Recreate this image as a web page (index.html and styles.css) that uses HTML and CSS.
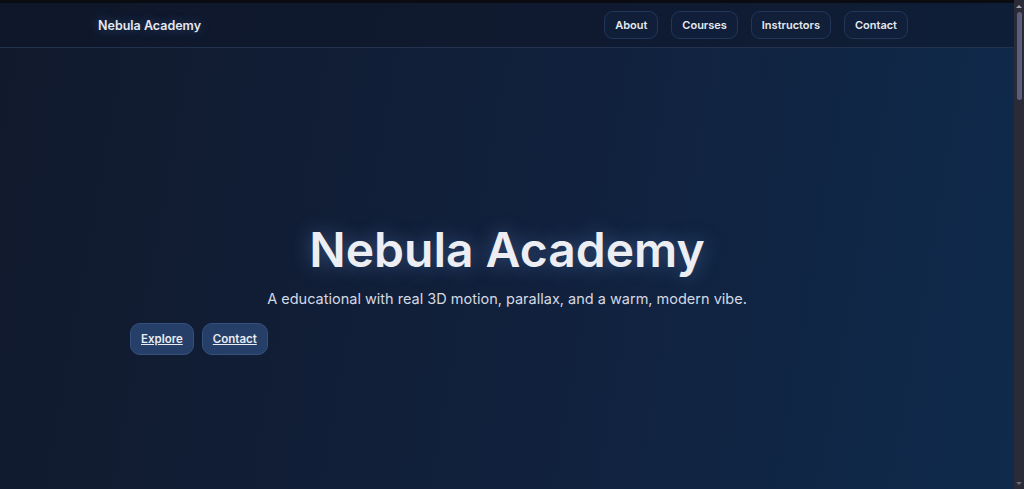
FILE: index.html
```html
<!DOCTYPE html>
<html lang="en">
<head>
    <meta charset="UTF-8">
    <meta name="viewport" content="width=device-width, initial-scale=1.0">
    <title>Nebula Academy</title>
    <link rel="stylesheet" href="styles.css">
</head>
<body>
    <div class="page">
        <header class="topbar">
            <div class="topbar-inner">
                <a class="brand" href="#">Nebula Academy</a>
                <nav class="nav">
                    <a class="nav-link" href="#about">About</a>
                    <a class="nav-link" href="#courses">Courses</a>
                    <a class="nav-link" href="#instructors">Instructors</a>
                    <a class="nav-link" href="#contact">Contact</a>
                </nav>
            </div>
        </header>

        <main>
            <section class="hero">
                <div class="hero-inner">
                    <h1 class="hero-title">Nebula Academy</h1>
                    <p class="hero-text">A educational with real 3D motion, parallax, and a warm, modern vibe.</p>
                    <div class="hero-actions">
                        <a class="btn" href="#courses">Explore</a>
                        <a class="btn" href="#contact">Contact</a>
                    </div>
                </div>
            </section>

            <section class="more" id="about"></section>
        </main>
    </div>

    <!-- slim scroll rail -->
    <div class="rail">
        <span class="rail-arrow up"></span>
        <span class="rail-thumb"></span>
        <span class="rail-arrow down"></span>
    </div>
</body>
</html>
```

FILE: styles.css
```css
* {
    box-sizing: border-box;
}
html, body {
    height: 100%;
    overflow: hidden;
}
body {
    margin: 0;
    display: flex;
    font-family: "Inter", "Open Sans", sans-serif;
    color: #e8ebf2;
    background: #0e1526;
}

.page {
    flex: 1;
    height: 100vh;
    overflow: hidden;
    background: linear-gradient(100deg, #111a2d 0%, #11203b 50%, #0f2a4c 100%);
}

.rail {
    width: 10px;
    height: 100vh;
    display: flex;
    flex-direction: column;
    align-items: center;
    padding: 5px 0 4px;
    background: #2a2b36;
}
.rail-arrow {
    width: 0;
    height: 0;
    border-left: 3px solid transparent;
    border-right: 3px solid transparent;
}
.rail-arrow.up {
    border-bottom: 3px solid #a3a3b3;
}
.rail-arrow.down {
    margin-top: auto;
    border-top: 3px solid #6a6a7a;
}
.rail-thumb {
    width: 5px;
    height: 88px;
    margin-top: 4px;
    border-radius: 3px;
    background: #5d5d7e;
}

.topbar {
    height: 48px;
    border-top: 3px solid #0a0c12;
    border-bottom: 1px solid #23324e;
    background: rgba(14, 22, 40, 0.55);
}
.topbar-inner {
    max-width: 818px;
    height: 100%;
    margin: 0 auto;
    padding: 0 8px 0 0;
    display: flex;
    align-items: center;
    justify-content: space-between;
}
.brand {
    color: #e6e9f0;
    text-decoration: none;
    font-weight: 600;
    font-size: 12.5px;
    text-shadow: 0 0 12px rgba(110, 150, 230, 0.45);
}
.nav {
    display: flex;
    gap: 13px;
}
.nav-link {
    display: block;
    padding: 6px 10px;
    border: 1px solid #22365a;
    border-radius: 9px;
    background: rgba(18, 34, 62, 0.6);
    color: #e6e9f0;
    text-decoration: none;
    font-weight: 600;
    font-size: 11px;
    line-height: 14px;
}

.hero {
    min-height: 441px;
    display: flex;
    align-items: center;
    justify-content: center;
    padding-top: 40px;
}
.hero-inner {
    width: 754px;
}
.hero-title {
    margin: 0;
    text-align: center;
    font-size: 48px;
    font-weight: 600;
    line-height: 1.15;
    color: #eceef3;
    text-shadow: 0 0 20px rgba(120, 160, 240, 0.4);
}
.hero-text {
    margin: 12px 0 16px;
    text-align: center;
    font-size: 14.5px;
    color: #d4d9e4;
}
.hero-actions {
    display: flex;
    gap: 8px;
}
.btn {
    display: block;
    padding: 8px 10px;
    border: 1px solid #36507e;
    border-radius: 10px;
    background: #263f68;
    color: #e8ebf2;
    font-weight: 600;
    font-size: 11.5px;
    line-height: 14px;
}

.more {
    height: 300px;
}
```
